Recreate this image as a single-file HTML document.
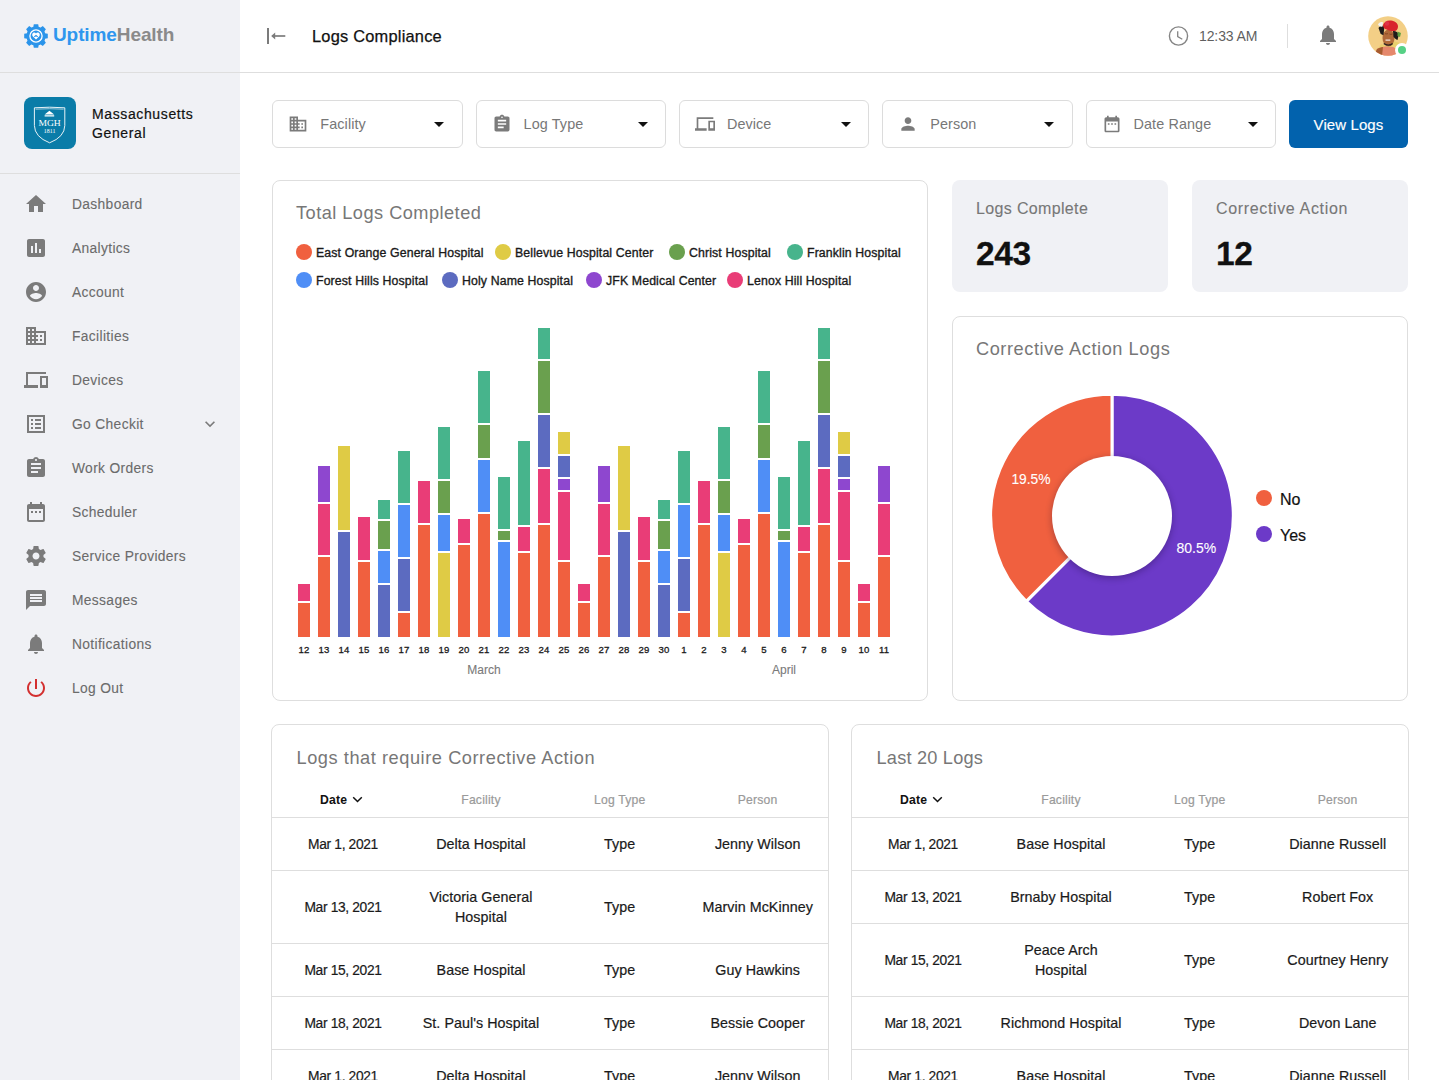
<!DOCTYPE html>
<html><head><meta charset="utf-8">
<style>
*{box-sizing:border-box;margin:0;padding:0}
html,body{width:1439px;height:1080px;overflow:hidden;background:#fff;font-family:"Liberation Sans",sans-serif;color:#1f1f1f}
.a{position:absolute}
.t{position:absolute;white-space:nowrap;line-height:1}
.hl{position:absolute;height:1px;background:#DEDEDE}
.card{position:absolute;border:1px solid #DEDEDE;border-radius:8px;background:#fff}
.filt{position:absolute;top:100px;height:48px;border:1px solid #DCDCDC;border-radius:6px;background:#fff}
.bar{position:absolute;width:12px}
</style></head>
<body>

<div class="a" style="left:0;top:0;width:240px;height:1080px;background:#F0F1F5"></div>
<div class="hl" style="left:0;top:72px;width:1439px"></div>
<div class="hl" style="left:0;top:173px;width:240px"></div>
<svg class="a" style="left:24px;top:24px" width="24" height="24" viewBox="0 0 24 24"><path fill="#2B94EA" d="M9.23 3.23 L9.81 0.20 L14.19 0.20 L14.77 3.23 L16.25 3.84 L18.80 2.11 L21.89 5.20 L20.16 7.75 L20.77 9.23 L23.80 9.81 L23.80 14.19 L20.77 14.77 L20.16 16.25 L21.89 18.80 L18.80 21.89 L16.25 20.16 L14.77 20.77 L14.19 23.80 L9.81 23.80 L9.23 20.77 L7.75 20.16 L5.20 21.89 L2.11 18.80 L3.84 16.25 L3.23 14.77 L0.20 14.19 L0.20 9.81 L3.23 9.23 L3.84 7.75 L2.11 5.20 L5.20 2.11 L7.75 3.84Z"/><circle cx="12" cy="12" r="9.6" fill="#2B94EA"/><circle cx="12" cy="12" r="6.1" fill="none" stroke="#fff" stroke-width="1.3"/><path fill="#fff" d="M12 15.4L8.9 12.5C7.8 11.5 8 9.2 9.7 8.6C10.7 8.3 11.5 8.8 12 9.4C12.5 8.8 13.3 8.3 14.3 8.6C16 9.2 16.2 11.5 15.1 12.5Z"/><path d="M10.3 12.9L12 11.5L13.7 12.9" stroke="#2B94EA" stroke-width="1.1" fill="none"/></svg>
<div class="t" style="left:53px;top:25px;font-size:19px;color:#1f1f1f;font-weight:bold;letter-spacing:-0.1px"><span style="color:#2E96EE">Uptime</span><span style="color:#8A8A8A">Health</span></div>
<div class="a" style="left:24px;top:97px;width:52px;height:52px;border-radius:8px;background:#0A7CA8"></div>
<svg class="a" style="left:24px;top:97px" width="52" height="52" viewBox="0 0 52 52">
<path d="M10.4 10.8Q25.6 9.6 40.8 10.8L40.8 28.5Q40.6 40 25.6 45.8Q10.6 40 10.4 28.5Z" fill="none" stroke="#fff" stroke-width="0.9"/>
<path d="M11.6 12.2Q25.6 11.2 39.6 12.2" fill="none" stroke="#fff" stroke-width="0.6"/>
<path d="M25.4 13.8L30.2 17.4H20.6Z M20.6 18.3h9.6v1.3h-9.6z" fill="#fff"/>
<text x="14.4" y="28.8" font-family="Liberation Serif" font-size="9.2" fill="#fff" textLength="22.4" lengthAdjust="spacingAndGlyphs">MGH</text>
<text x="19.8" y="35.5" font-family="Liberation Serif" font-size="5.6" fill="#fff" textLength="11.6" lengthAdjust="spacingAndGlyphs">1811</text>
</svg>
<div class="t" style="left:92px;top:107.2px;font-size:14px;color:#111;font-weight:normal;letter-spacing:0.62px;-webkit-text-stroke:0.2px #111">Massachusetts</div>
<div class="t" style="left:92px;top:126.2px;font-size:14px;color:#111;font-weight:normal;letter-spacing:0.62px;-webkit-text-stroke:0.2px #111">General</div>
<svg class="a" style="left:24px;top:192px" width="24" height="24" viewBox="0 0 24 24"><path fill="#7B7B7B" d="M10 20v-6h4v6h5v-8h3L12 3 2 12h3v8z"/></svg>
<div class="t" style="left:72px;top:198.3px;font-size:13.8px;color:#6B6B6B;font-weight:normal;letter-spacing:0.35px;-webkit-text-stroke:0.1px #6B6B6B">Dashboard</div>
<svg class="a" style="left:24px;top:236px" width="24" height="24" viewBox="0 0 24 24"><path fill="#7B7B7B" d="M19 3H5c-1.1 0-2 .9-2 2v14c0 1.1.9 2 2 2h14c1.1 0 2-.9 2-2V5c0-1.1-.9-2-2-2zM9 17H7v-7h2v7zm4 0h-2V7h2v10zm4 0h-2v-4h2v4z"/></svg>
<div class="t" style="left:72px;top:242.3px;font-size:13.8px;color:#6B6B6B;font-weight:normal;letter-spacing:0.35px;-webkit-text-stroke:0.1px #6B6B6B">Analytics</div>
<svg class="a" style="left:24px;top:280px" width="24" height="24" viewBox="0 0 24 24"><path fill="#7B7B7B" d="M12 2C6.48 2 2 6.48 2 12s4.48 10 10 10 10-4.48 10-10S17.52 2 12 2zm0 3c1.66 0 3 1.34 3 3s-1.34 3-3 3-3-1.34-3-3 1.34-3 3-3zm0 14.2c-2.5 0-4.71-1.28-6-3.22.03-1.99 4-3.08 6-3.08 1.990 0 5.97 1.09 6 3.08-1.29 1.94-3.5 3.22-6 3.22z"/></svg>
<div class="t" style="left:72px;top:286.3px;font-size:13.8px;color:#6B6B6B;font-weight:normal;letter-spacing:0.35px;-webkit-text-stroke:0.1px #6B6B6B">Account</div>
<svg class="a" style="left:24px;top:324px" width="24" height="24" viewBox="0 0 24 24"><path fill="#7B7B7B" d="M12 7V3H2v18h20V7H12zM6 19H4v-2h2v2zm0-4H4v-2h2v2zm0-4H4V9h2v2zm0-4H4V5h2v2zm4 12H8v-2h2v2zm0-4H8v-2h2v2zm0-4H8V9h2v2zm0-4H8V5h2v2zm10 12h-8v-2h2v-2h-2v-2h2v-2h-2V9h8v10zm-2-8h-2v2h2v-2zm0 4h-2v2h2v-2z"/></svg>
<div class="t" style="left:72px;top:330.3px;font-size:13.8px;color:#6B6B6B;font-weight:normal;letter-spacing:0.35px;-webkit-text-stroke:0.1px #6B6B6B">Facilities</div>
<svg class="a" style="left:24px;top:368px" width="24" height="24" viewBox="0 0 24 24"><path fill="#7B7B7B" d="M4 6h18V4H2v13H0v3h14v-3H4V6zm20 2h-8v12h8V8zm-2 9h-4v-7h4v7z"/></svg>
<div class="t" style="left:72px;top:374.3px;font-size:13.8px;color:#6B6B6B;font-weight:normal;letter-spacing:0.35px;-webkit-text-stroke:0.1px #6B6B6B">Devices</div>
<svg class="a" style="left:24px;top:412px" width="24" height="24" viewBox="0 0 24 24"><path fill="#7B7B7B" d="M19 5v14H5V5h14m2-2H3v18h18V3zM11 7h6v2h-6V7zm0 4h6v2h-6v-2zm0 4h6v2h-6zM7 7h2v2H7zm0 4h2v2H7zm0 4h2v2H7z"/></svg>
<div class="t" style="left:72px;top:418.3px;font-size:13.8px;color:#6B6B6B;font-weight:normal;letter-spacing:0.35px;-webkit-text-stroke:0.1px #6B6B6B">Go Checkit</div>
<svg class="a" style="left:24px;top:456px" width="24" height="24" viewBox="0 0 24 24"><path fill="#7B7B7B" d="M19 3h-4.18C14.4 1.84 13.3 1 12 1c-1.3 0-2.4.84-2.82 2H5c-1.1 0-2 .9-2 2v14c0 1.1.9 2 2 2h14c1.1 0 2-.9 2-2V5c0-1.1-.9-2-2-2zm-7 0c.55 0 1 .45 1 1s-.45 1-1 1-1-.45-1-1 .45-1 1-1zm2 14H7v-2h7v2zm3-4H7v-2h10v2zm0-4H7V7h10v2z"/></svg>
<div class="t" style="left:72px;top:462.3px;font-size:13.8px;color:#6B6B6B;font-weight:normal;letter-spacing:0.35px;-webkit-text-stroke:0.1px #6B6B6B">Work Orders</div>
<svg class="a" style="left:24px;top:500px" width="24" height="24" viewBox="0 0 24 24"><path fill="#7B7B7B" d="M9 11H7v2h2v-2zm4 0h-2v2h2v-2zm4 0h-2v2h2v-2zm2-7h-1V2h-2v2H8V2H6v2H5c-1.11 0-1.99.9-1.99 2L3 20c0 1.1.89 2 2 2h14c1.1 0 2-.9 2-2V6c0-1.1-.9-2-2-2zm0 16H5V9h14v11z"/></svg>
<div class="t" style="left:72px;top:506.3px;font-size:13.8px;color:#6B6B6B;font-weight:normal;letter-spacing:0.35px;-webkit-text-stroke:0.1px #6B6B6B">Scheduler</div>
<svg class="a" style="left:24px;top:544px" width="24" height="24" viewBox="0 0 24 24"><path fill="#7B7B7B" d="M19.43 12.98c.04-.32.07-.64.07-.98s-.03-.66-.07-.98l2.11-1.65c.19-.15.24-.42.12-.64l-2-3.46c-.12-.22-.39-.3-.61-.22l-2.49 1c-.52-.4-1.08-.73-1.69-.98l-.38-2.65C14.46 2.18 14.25 2 14 2h-4c-.25 0-.46.18-.49.42l-.38 2.65c-.61.25-1.17.59-1.69.98l-2.49-1c-.23-.09-.49 0-.61.22l-2 3.46c-.13.22-.07.49.12.64l2.11 1.65c-.04.32-.07.65-.07.98s.03.66.07.98l-2.11 1.65c-.19.15-.24.42-.12.64l2 3.46c.12.22.39.3.61.22l2.49-1c.52.4 1.08.73 1.69.98l.38 2.65c.03.24.24.42.49.42h4c.25 0 .46-.18.49-.42l.38-2.65c.61-.25 1.17-.59 1.69-.98l2.49 1c.23.09.49 0 .61-.22l2-3.46c.12-.22.07-.49-.12-.64l-2.11-1.65zM12 15.5c-1.93 0-3.5-1.57-3.5-3.5s1.57-3.5 3.5-3.5 3.5 1.57 3.5 3.5-1.57 3.5-3.5 3.5z"/></svg>
<div class="t" style="left:72px;top:550.3px;font-size:13.8px;color:#6B6B6B;font-weight:normal;letter-spacing:0.35px;-webkit-text-stroke:0.1px #6B6B6B">Service Providers</div>
<svg class="a" style="left:24px;top:588px" width="24" height="24" viewBox="0 0 24 24"><path fill="#7B7B7B" d="M20 2H4c-1.1 0-1.99.9-1.99 2L2 22l4-4h14c1.1 0 2-.9 2-2V4c0-1.1-.9-2-2-2zm-2 12H6v-2h12v2zm0-3H6V9h12v2zm0-3H6V6h12v2z"/></svg>
<div class="t" style="left:72px;top:594.3px;font-size:13.8px;color:#6B6B6B;font-weight:normal;letter-spacing:0.35px;-webkit-text-stroke:0.1px #6B6B6B">Messages</div>
<svg class="a" style="left:24px;top:632px" width="24" height="24" viewBox="0 0 24 24"><path fill="#7B7B7B" d="M12 22c1.1 0 2-.9 2-2h-4c0 1.1.89 2 2 2zm6-6v-5c0-3.07-1.64-5.64-4.5-6.32V4c0-.83-.67-1.5-1.5-1.5s-1.5.67-1.5 1.5v.68C7.63 5.36 6 7.920 6 11v5l-2 2v1h16v-1l-2-2z"/></svg>
<div class="t" style="left:72px;top:638.3px;font-size:13.8px;color:#6B6B6B;font-weight:normal;letter-spacing:0.35px;-webkit-text-stroke:0.1px #6B6B6B">Notifications</div>
<svg class="a" style="left:24px;top:676px" width="24" height="24" viewBox="0 0 24 24"><path fill="#D32F2F" d="M13 3h-2v10h2V3zm4.83 2.17l-1.42 1.42C17.99 7.86 19 9.81 19 12c0 3.87-3.13 7-7 7s-7-3.13-7-7c0-2.19 1.01-4.14 2.58-5.42L6.17 5.17C4.23 6.82 3 9.26 3 12c0 4.97 4.03 9 9 9s9-4.03 9-9c0-2.74-1.23-5.18-3.17-6.83z"/></svg>
<div class="t" style="left:72px;top:682.3px;font-size:13.8px;color:#6B6B6B;font-weight:normal;letter-spacing:0.35px;-webkit-text-stroke:0.1px #6B6B6B">Log Out</div>
<svg class="a" style="left:200px;top:414px" width="20" height="20" viewBox="0 0 24 24"><path fill="#7B7B7B" d="M16.59 8.59L12 13.17 7.41 8.59 6 10l6 6 6-6z"/></svg>
<div class="a" style="left:267px;top:28px;width:2px;height:16px;background:#7B7B7B"></div>
<svg class="a" style="left:270px;top:30px" width="16" height="12" viewBox="0 0 16 12"><path d="M15.3 6H2.5" stroke="#7B7B7B" stroke-width="1.7" fill="none"/><path d="M1.2 6L5.2 2.6V9.4Z" fill="#7B7B7B"/></svg>
<div class="t" style="left:312px;top:28px;font-size:16.4px;color:#111;font-weight:normal;letter-spacing:0.22px;-webkit-text-stroke:0.25px #111">Logs Compliance</div>
<svg class="a" style="left:1166px;top:24px" width="25" height="24" viewBox="0 0 25 24"><circle cx="12.5" cy="12" r="9.1" fill="none" stroke="#858585" stroke-width="1.4"/><path d="M11.7 7.2V12.6L16.3 15.3" fill="none" stroke="#858585" stroke-width="1.3"/></svg>
<div class="t" style="left:1199px;top:29px;font-size:14px;color:#5F5F5F;font-weight:normal;letter-spacing:-0.1px">12:33 AM</div>
<div class="a" style="left:1287px;top:24px;width:1px;height:24px;background:#DEDEDE"></div>
<svg class="a" style="left:1316px;top:23px" width="24" height="24" viewBox="0 0 24 24"><path fill="#7B7B7B" d="M12 22c1.1 0 2-.9 2-2h-4c0 1.1.89 2 2 2zm6-6v-5c0-3.07-1.64-5.64-4.5-6.32V4c0-.83-.67-1.5-1.5-1.5s-1.5.67-1.5 1.5v.68C7.63 5.36 6 7.920 6 11v5l-2 2v1h16v-1l-2-2z"/></svg>
<svg class="a" style="left:1368px;top:16px" width="40" height="40" viewBox="0 0 40 40">
<defs><clipPath id="avc"><circle cx="20" cy="20" r="19.8"/></clipPath></defs>
<g clip-path="url(#avc)">
<rect width="40" height="40" fill="#F3CF86"/>
<path d="M8 36L13 28L20 31L25 25L32 27L29 33Z" fill="#E2CF62" opacity="0.7"/>
<path d="M6 40L9 33C13 31 17 30 21 31C25 30 28 32 31 36L31 40Z" fill="#E5886C"/>
<path d="M6 40L9 33C11 32 13 31 15 31L14 40Z" fill="#A65C30"/>
<ellipse cx="20.5" cy="22" rx="6" ry="8.6" fill="#B06A3A"/>
<path d="M17 17.5c1 .5 2 .5 3 0M21.5 18c1 .5 2 .4 3 0" stroke="#7A3F1E" stroke-width="0.8" fill="none"/>
<path d="M17.5 24.2h4.8" stroke="#F4E6E0" stroke-width="1.3"/>
<path d="M15.8 27.5c2.5 2.2 6.5 2.2 8.8 0" stroke="#2A2320" stroke-width="1.4" fill="none"/>
<path d="M10.5 12c1-2 4-3 6-2l-1 9c-1 0-2-.5-3-1.5z" fill="#1F1B1A"/>
<path d="M25 15c2-.5 5 1 6 3l-1.5 6c-1.5-.5-3-2-4-3z" fill="#1F1B1A"/>
<path d="M15 9c1-3 4-5 8-4.5c4 .5 7 2.5 7 6c0 2.5-1.5 4.5-3.5 4.5c-3 .5-6-.5-8-1.5c-2-.5-3.5-2-3.5-4.5z" fill="#D8232D"/>
<circle cx="19" cy="7.5" r="2.2" fill="#E23A5E" opacity="0.6"/>
<path d="M10 8.5c1-2 3-3 5-2l-.5 4c-1.5.5-3.5 0-4.5-2z" fill="#F2F2F2"/>
<path d="M29.5 15.5l3.5 1.5-1 4-2.5-1z" fill="#5FA040"/>
</g></svg>
<div class="a" style="left:1395px;top:43px;width:14px;height:14px;border-radius:50%;background:#fff"></div>
<div class="a" style="left:1398px;top:46px;width:8px;height:8px;border-radius:50%;background:#56D185"></div>
<div class="filt" style="left:272.3px;width:190.6px"></div>
<svg class="a" style="left:288.3px;top:114px" width="20" height="20" viewBox="0 0 24 24"><path fill="#7B7B7B" d="M12 7V3H2v18h20V7H12zM6 19H4v-2h2v2zm0-4H4v-2h2v2zm0-4H4V9h2v2zm0-4H4V5h2v2zm4 12H8v-2h2v2zm0-4H8v-2h2v2zm0-4H8V9h2v2zm0-4H8V5h2v2zm10 12h-8v-2h2v-2h-2v-2h2v-2h-2V9h8v10zm-2-8h-2v2h2v-2zm0 4h-2v2h2v-2z"/></svg>
<div class="t" style="left:320.3px;top:117px;font-size:14.4px;color:#777;font-weight:normal;letter-spacing:0.1px">Facility</div>
<svg class="a" style="left:434.3px;top:121.5px" width="10" height="5" viewBox="0 0 10 5"><path d="M0 0h10L5 5z" fill="#111"/></svg>
<div class="filt" style="left:475.6px;width:190.6px"></div>
<svg class="a" style="left:491.6px;top:114px" width="20" height="20" viewBox="0 0 24 24"><path fill="#7B7B7B" d="M19 3h-4.18C14.4 1.84 13.3 1 12 1c-1.3 0-2.4.84-2.82 2H5c-1.1 0-2 .9-2 2v14c0 1.1.9 2 2 2h14c1.1 0 2-.9 2-2V5c0-1.1-.9-2-2-2zm-7 0c.55 0 1 .45 1 1s-.45 1-1 1-1-.45-1-1 .45-1 1-1zm2 14H7v-2h7v2zm3-4H7v-2h10v2zm0-4H7V7h10v2z"/></svg>
<div class="t" style="left:523.6px;top:117px;font-size:14.4px;color:#777;font-weight:normal;letter-spacing:0.1px">Log Type</div>
<svg class="a" style="left:637.6px;top:121.5px" width="10" height="5" viewBox="0 0 10 5"><path d="M0 0h10L5 5z" fill="#111"/></svg>
<div class="filt" style="left:678.9px;width:190.6px"></div>
<svg class="a" style="left:694.9px;top:114px" width="20" height="20" viewBox="0 0 24 24"><path fill="#7B7B7B" d="M4 6h18V4H2v13H0v3h14v-3H4V6zm20 2h-8v12h8V8zm-2 9h-4v-7h4v7z"/></svg>
<div class="t" style="left:726.9px;top:117px;font-size:14.4px;color:#777;font-weight:normal;letter-spacing:0.1px">Device</div>
<svg class="a" style="left:840.9px;top:121.5px" width="10" height="5" viewBox="0 0 10 5"><path d="M0 0h10L5 5z" fill="#111"/></svg>
<div class="filt" style="left:882.2px;width:190.6px"></div>
<svg class="a" style="left:898.2px;top:114px" width="20" height="20" viewBox="0 0 24 24"><path fill="#7B7B7B" d="M12 12c2.21 0 4-1.79 4-4s-1.79-4-4-4-4 1.79-4 4 1.79 4 4 4zm0 2c-2.67 0-8 1.34-8 4v2h16v-2c0-2.66-5.33-4-8-4z"/></svg>
<div class="t" style="left:930.2px;top:117px;font-size:14.4px;color:#777;font-weight:normal;letter-spacing:0.1px">Person</div>
<svg class="a" style="left:1044.2px;top:121.5px" width="10" height="5" viewBox="0 0 10 5"><path d="M0 0h10L5 5z" fill="#111"/></svg>
<div class="filt" style="left:1085.5px;width:190.6px"></div>
<svg class="a" style="left:1101.5px;top:114px" width="20" height="20" viewBox="0 0 24 24"><path fill="#7B7B7B" d="M9 11H7v2h2v-2zm4 0h-2v2h2v-2zm4 0h-2v2h2v-2zm2-7h-1V2h-2v2H8V2H6v2H5c-1.11 0-1.99.9-1.99 2L3 20c0 1.1.89 2 2 2h14c1.1 0 2-.9 2-2V6c0-1.1-.9-2-2-2zm0 16H5V9h14v11z"/></svg>
<div class="t" style="left:1133.5px;top:117px;font-size:14.4px;color:#777;font-weight:normal;letter-spacing:0.1px">Date Range</div>
<svg class="a" style="left:1247.5px;top:121.5px" width="10" height="5" viewBox="0 0 10 5"><path d="M0 0h10L5 5z" fill="#111"/></svg>
<div class="a" style="left:1289px;top:100px;width:119px;height:48px;border-radius:6px;background:#0262AD"></div>
<div class="t" style="left:1228.5px;top:116.7px;width:240px;text-align:center;font-size:15px;color:#fff;font-weight:normal;letter-spacing:0.1px;-webkit-text-stroke:0.15px #fff">View Logs</div>
<div class="card" style="left:272px;top:180px;width:656px;height:521px"></div>
<div class="t" style="left:296px;top:204px;font-size:18.2px;color:#777;font-weight:normal;letter-spacing:0.47px">Total Logs Completed</div>
<div class="a" style="left:296px;top:244px;width:16px;height:16px;border-radius:50%;background:#F0603F"></div>
<div class="t" style="left:316px;top:246.7px;font-size:12.3px;color:#1a1a1a;font-weight:normal;letter-spacing:0.13px;-webkit-text-stroke:0.35px #1a1a1a">East Orange General Hospital</div>
<div class="a" style="left:495px;top:244px;width:16px;height:16px;border-radius:50%;background:#DFCB45"></div>
<div class="t" style="left:515px;top:246.7px;font-size:12.3px;color:#1a1a1a;font-weight:normal;letter-spacing:0.13px;-webkit-text-stroke:0.35px #1a1a1a">Bellevue Hospital Center</div>
<div class="a" style="left:669px;top:244px;width:16px;height:16px;border-radius:50%;background:#6AA04E"></div>
<div class="t" style="left:689px;top:246.7px;font-size:12.3px;color:#1a1a1a;font-weight:normal;letter-spacing:0.13px;-webkit-text-stroke:0.35px #1a1a1a">Christ Hospital</div>
<div class="a" style="left:787px;top:244px;width:16px;height:16px;border-radius:50%;background:#47B48C"></div>
<div class="t" style="left:807px;top:246.7px;font-size:12.3px;color:#1a1a1a;font-weight:normal;letter-spacing:0.13px;-webkit-text-stroke:0.35px #1a1a1a">Franklin Hospital</div>
<div class="a" style="left:296px;top:272px;width:16px;height:16px;border-radius:50%;background:#4F8EF6"></div>
<div class="t" style="left:316px;top:274.7px;font-size:12.3px;color:#1a1a1a;font-weight:normal;letter-spacing:0.13px;-webkit-text-stroke:0.35px #1a1a1a">Forest Hills Hospital</div>
<div class="a" style="left:442px;top:272px;width:16px;height:16px;border-radius:50%;background:#5C6BC0"></div>
<div class="t" style="left:462px;top:274.7px;font-size:12.3px;color:#1a1a1a;font-weight:normal;letter-spacing:0.13px;-webkit-text-stroke:0.35px #1a1a1a">Holy Name Hospital</div>
<div class="a" style="left:586px;top:272px;width:16px;height:16px;border-radius:50%;background:#8E47CF"></div>
<div class="t" style="left:606px;top:274.7px;font-size:12.3px;color:#1a1a1a;font-weight:normal;letter-spacing:0.13px;-webkit-text-stroke:0.35px #1a1a1a">JFK Medical Center</div>
<div class="a" style="left:727px;top:272px;width:16px;height:16px;border-radius:50%;background:#E93D77"></div>
<div class="t" style="left:747px;top:274.7px;font-size:12.3px;color:#1a1a1a;font-weight:normal;letter-spacing:0.13px;-webkit-text-stroke:0.35px #1a1a1a">Lenox Hill Hospital</div>
<div class="bar" style="left:298px;top:603px;height:34px;background:#F0603F"></div>
<div class="bar" style="left:298px;top:584px;height:17px;background:#E93D77"></div>
<div class="t" style="left:289.0px;top:645px;width:30px;text-align:center;font-size:9.6px;color:#1a1a1a;font-weight:normal;letter-spacing:0.1px;-webkit-text-stroke:0.3px #1a1a1a">12</div>
<div class="bar" style="left:318px;top:557px;height:80px;background:#F0603F"></div>
<div class="bar" style="left:318px;top:504px;height:51px;background:#E93D77"></div>
<div class="bar" style="left:318px;top:466px;height:36px;background:#8E47CF"></div>
<div class="t" style="left:309.0px;top:645px;width:30px;text-align:center;font-size:9.6px;color:#1a1a1a;font-weight:normal;letter-spacing:0.1px;-webkit-text-stroke:0.3px #1a1a1a">13</div>
<div class="bar" style="left:338px;top:532px;height:105px;background:#5C6BC0"></div>
<div class="bar" style="left:338px;top:446px;height:84px;background:#DFCB45"></div>
<div class="t" style="left:329.0px;top:645px;width:30px;text-align:center;font-size:9.6px;color:#1a1a1a;font-weight:normal;letter-spacing:0.1px;-webkit-text-stroke:0.3px #1a1a1a">14</div>
<div class="bar" style="left:358px;top:562px;height:75px;background:#F0603F"></div>
<div class="bar" style="left:358px;top:517px;height:43px;background:#E93D77"></div>
<div class="t" style="left:349.0px;top:645px;width:30px;text-align:center;font-size:9.6px;color:#1a1a1a;font-weight:normal;letter-spacing:0.1px;-webkit-text-stroke:0.3px #1a1a1a">15</div>
<div class="bar" style="left:378px;top:585px;height:52px;background:#5C6BC0"></div>
<div class="bar" style="left:378px;top:551px;height:32px;background:#4F8EF6"></div>
<div class="bar" style="left:378px;top:521px;height:28px;background:#6AA04E"></div>
<div class="bar" style="left:378px;top:500px;height:18.5px;background:#47B48C"></div>
<div class="t" style="left:369.0px;top:645px;width:30px;text-align:center;font-size:9.6px;color:#1a1a1a;font-weight:normal;letter-spacing:0.1px;-webkit-text-stroke:0.3px #1a1a1a">16</div>
<div class="bar" style="left:398px;top:613px;height:24px;background:#F0603F"></div>
<div class="bar" style="left:398px;top:559px;height:52px;background:#5C6BC0"></div>
<div class="bar" style="left:398px;top:505px;height:52px;background:#4F8EF6"></div>
<div class="bar" style="left:398px;top:451px;height:52px;background:#47B48C"></div>
<div class="t" style="left:389.0px;top:645px;width:30px;text-align:center;font-size:9.6px;color:#1a1a1a;font-weight:normal;letter-spacing:0.1px;-webkit-text-stroke:0.3px #1a1a1a">17</div>
<div class="bar" style="left:418px;top:525px;height:112px;background:#F0603F"></div>
<div class="bar" style="left:418px;top:481px;height:42px;background:#E93D77"></div>
<div class="t" style="left:409.0px;top:645px;width:30px;text-align:center;font-size:9.6px;color:#1a1a1a;font-weight:normal;letter-spacing:0.1px;-webkit-text-stroke:0.3px #1a1a1a">18</div>
<div class="bar" style="left:438px;top:553px;height:84px;background:#DFCB45"></div>
<div class="bar" style="left:438px;top:515px;height:36px;background:#4F8EF6"></div>
<div class="bar" style="left:438px;top:481px;height:32px;background:#6AA04E"></div>
<div class="bar" style="left:438px;top:427px;height:52px;background:#47B48C"></div>
<div class="t" style="left:429.0px;top:645px;width:30px;text-align:center;font-size:9.6px;color:#1a1a1a;font-weight:normal;letter-spacing:0.1px;-webkit-text-stroke:0.3px #1a1a1a">19</div>
<div class="bar" style="left:458px;top:545px;height:92px;background:#F0603F"></div>
<div class="bar" style="left:458px;top:519px;height:24px;background:#E93D77"></div>
<div class="t" style="left:449.0px;top:645px;width:30px;text-align:center;font-size:9.6px;color:#1a1a1a;font-weight:normal;letter-spacing:0.1px;-webkit-text-stroke:0.3px #1a1a1a">20</div>
<div class="bar" style="left:478px;top:514px;height:123px;background:#F0603F"></div>
<div class="bar" style="left:478px;top:460px;height:52px;background:#4F8EF6"></div>
<div class="bar" style="left:478px;top:425px;height:33px;background:#6AA04E"></div>
<div class="bar" style="left:478px;top:371px;height:52px;background:#47B48C"></div>
<div class="t" style="left:469.0px;top:645px;width:30px;text-align:center;font-size:9.6px;color:#1a1a1a;font-weight:normal;letter-spacing:0.1px;-webkit-text-stroke:0.3px #1a1a1a">21</div>
<div class="bar" style="left:498px;top:542px;height:95px;background:#4F8EF6"></div>
<div class="bar" style="left:498px;top:531px;height:9px;background:#6AA04E"></div>
<div class="bar" style="left:498px;top:477px;height:52px;background:#47B48C"></div>
<div class="t" style="left:489.0px;top:645px;width:30px;text-align:center;font-size:9.6px;color:#1a1a1a;font-weight:normal;letter-spacing:0.1px;-webkit-text-stroke:0.3px #1a1a1a">22</div>
<div class="bar" style="left:518px;top:553px;height:84px;background:#F0603F"></div>
<div class="bar" style="left:518px;top:527px;height:24px;background:#E93D77"></div>
<div class="bar" style="left:518px;top:441px;height:84px;background:#47B48C"></div>
<div class="t" style="left:509.0px;top:645px;width:30px;text-align:center;font-size:9.6px;color:#1a1a1a;font-weight:normal;letter-spacing:0.1px;-webkit-text-stroke:0.3px #1a1a1a">23</div>
<div class="bar" style="left:538px;top:525px;height:112px;background:#F0603F"></div>
<div class="bar" style="left:538px;top:469px;height:54px;background:#E93D77"></div>
<div class="bar" style="left:538px;top:415px;height:52px;background:#5C6BC0"></div>
<div class="bar" style="left:538px;top:361px;height:52px;background:#6AA04E"></div>
<div class="bar" style="left:538px;top:328px;height:31px;background:#47B48C"></div>
<div class="t" style="left:529.0px;top:645px;width:30px;text-align:center;font-size:9.6px;color:#1a1a1a;font-weight:normal;letter-spacing:0.1px;-webkit-text-stroke:0.3px #1a1a1a">24</div>
<div class="bar" style="left:558px;top:562px;height:75px;background:#F0603F"></div>
<div class="bar" style="left:558px;top:492px;height:68px;background:#E93D77"></div>
<div class="bar" style="left:558px;top:479px;height:11px;background:#8E47CF"></div>
<div class="bar" style="left:558px;top:456px;height:21px;background:#5C6BC0"></div>
<div class="bar" style="left:558px;top:432px;height:22px;background:#DFCB45"></div>
<div class="t" style="left:549.0px;top:645px;width:30px;text-align:center;font-size:9.6px;color:#1a1a1a;font-weight:normal;letter-spacing:0.1px;-webkit-text-stroke:0.3px #1a1a1a">25</div>
<div class="bar" style="left:578px;top:603px;height:34px;background:#F0603F"></div>
<div class="bar" style="left:578px;top:584px;height:17px;background:#E93D77"></div>
<div class="t" style="left:569.0px;top:645px;width:30px;text-align:center;font-size:9.6px;color:#1a1a1a;font-weight:normal;letter-spacing:0.1px;-webkit-text-stroke:0.3px #1a1a1a">26</div>
<div class="bar" style="left:598px;top:557px;height:80px;background:#F0603F"></div>
<div class="bar" style="left:598px;top:504px;height:51px;background:#E93D77"></div>
<div class="bar" style="left:598px;top:466px;height:36px;background:#8E47CF"></div>
<div class="t" style="left:589.0px;top:645px;width:30px;text-align:center;font-size:9.6px;color:#1a1a1a;font-weight:normal;letter-spacing:0.1px;-webkit-text-stroke:0.3px #1a1a1a">27</div>
<div class="bar" style="left:618px;top:532px;height:105px;background:#5C6BC0"></div>
<div class="bar" style="left:618px;top:446px;height:84px;background:#DFCB45"></div>
<div class="t" style="left:609.0px;top:645px;width:30px;text-align:center;font-size:9.6px;color:#1a1a1a;font-weight:normal;letter-spacing:0.1px;-webkit-text-stroke:0.3px #1a1a1a">28</div>
<div class="bar" style="left:638px;top:562px;height:75px;background:#F0603F"></div>
<div class="bar" style="left:638px;top:517px;height:43px;background:#E93D77"></div>
<div class="t" style="left:629.0px;top:645px;width:30px;text-align:center;font-size:9.6px;color:#1a1a1a;font-weight:normal;letter-spacing:0.1px;-webkit-text-stroke:0.3px #1a1a1a">29</div>
<div class="bar" style="left:658px;top:585px;height:52px;background:#5C6BC0"></div>
<div class="bar" style="left:658px;top:551px;height:32px;background:#4F8EF6"></div>
<div class="bar" style="left:658px;top:521px;height:28px;background:#6AA04E"></div>
<div class="bar" style="left:658px;top:500px;height:18.5px;background:#47B48C"></div>
<div class="t" style="left:649.0px;top:645px;width:30px;text-align:center;font-size:9.6px;color:#1a1a1a;font-weight:normal;letter-spacing:0.1px;-webkit-text-stroke:0.3px #1a1a1a">30</div>
<div class="bar" style="left:678px;top:613px;height:24px;background:#F0603F"></div>
<div class="bar" style="left:678px;top:559px;height:52px;background:#5C6BC0"></div>
<div class="bar" style="left:678px;top:505px;height:52px;background:#4F8EF6"></div>
<div class="bar" style="left:678px;top:451px;height:52px;background:#47B48C"></div>
<div class="t" style="left:669.0px;top:645px;width:30px;text-align:center;font-size:9.6px;color:#1a1a1a;font-weight:normal;letter-spacing:0.1px;-webkit-text-stroke:0.3px #1a1a1a">1</div>
<div class="bar" style="left:698px;top:525px;height:112px;background:#F0603F"></div>
<div class="bar" style="left:698px;top:481px;height:42px;background:#E93D77"></div>
<div class="t" style="left:689.0px;top:645px;width:30px;text-align:center;font-size:9.6px;color:#1a1a1a;font-weight:normal;letter-spacing:0.1px;-webkit-text-stroke:0.3px #1a1a1a">2</div>
<div class="bar" style="left:718px;top:553px;height:84px;background:#DFCB45"></div>
<div class="bar" style="left:718px;top:515px;height:36px;background:#4F8EF6"></div>
<div class="bar" style="left:718px;top:481px;height:32px;background:#6AA04E"></div>
<div class="bar" style="left:718px;top:427px;height:52px;background:#47B48C"></div>
<div class="t" style="left:709.0px;top:645px;width:30px;text-align:center;font-size:9.6px;color:#1a1a1a;font-weight:normal;letter-spacing:0.1px;-webkit-text-stroke:0.3px #1a1a1a">3</div>
<div class="bar" style="left:738px;top:545px;height:92px;background:#F0603F"></div>
<div class="bar" style="left:738px;top:519px;height:24px;background:#E93D77"></div>
<div class="t" style="left:729.0px;top:645px;width:30px;text-align:center;font-size:9.6px;color:#1a1a1a;font-weight:normal;letter-spacing:0.1px;-webkit-text-stroke:0.3px #1a1a1a">4</div>
<div class="bar" style="left:758px;top:514px;height:123px;background:#F0603F"></div>
<div class="bar" style="left:758px;top:460px;height:52px;background:#4F8EF6"></div>
<div class="bar" style="left:758px;top:425px;height:33px;background:#6AA04E"></div>
<div class="bar" style="left:758px;top:371px;height:52px;background:#47B48C"></div>
<div class="t" style="left:749.0px;top:645px;width:30px;text-align:center;font-size:9.6px;color:#1a1a1a;font-weight:normal;letter-spacing:0.1px;-webkit-text-stroke:0.3px #1a1a1a">5</div>
<div class="bar" style="left:778px;top:542px;height:95px;background:#4F8EF6"></div>
<div class="bar" style="left:778px;top:531px;height:9px;background:#6AA04E"></div>
<div class="bar" style="left:778px;top:477px;height:52px;background:#47B48C"></div>
<div class="t" style="left:769.0px;top:645px;width:30px;text-align:center;font-size:9.6px;color:#1a1a1a;font-weight:normal;letter-spacing:0.1px;-webkit-text-stroke:0.3px #1a1a1a">6</div>
<div class="bar" style="left:798px;top:553px;height:84px;background:#F0603F"></div>
<div class="bar" style="left:798px;top:527px;height:24px;background:#E93D77"></div>
<div class="bar" style="left:798px;top:441px;height:84px;background:#47B48C"></div>
<div class="t" style="left:789.0px;top:645px;width:30px;text-align:center;font-size:9.6px;color:#1a1a1a;font-weight:normal;letter-spacing:0.1px;-webkit-text-stroke:0.3px #1a1a1a">7</div>
<div class="bar" style="left:818px;top:525px;height:112px;background:#F0603F"></div>
<div class="bar" style="left:818px;top:469px;height:54px;background:#E93D77"></div>
<div class="bar" style="left:818px;top:415px;height:52px;background:#5C6BC0"></div>
<div class="bar" style="left:818px;top:361px;height:52px;background:#6AA04E"></div>
<div class="bar" style="left:818px;top:328px;height:31px;background:#47B48C"></div>
<div class="t" style="left:809.0px;top:645px;width:30px;text-align:center;font-size:9.6px;color:#1a1a1a;font-weight:normal;letter-spacing:0.1px;-webkit-text-stroke:0.3px #1a1a1a">8</div>
<div class="bar" style="left:838px;top:562px;height:75px;background:#F0603F"></div>
<div class="bar" style="left:838px;top:492px;height:68px;background:#E93D77"></div>
<div class="bar" style="left:838px;top:479px;height:11px;background:#8E47CF"></div>
<div class="bar" style="left:838px;top:456px;height:21px;background:#5C6BC0"></div>
<div class="bar" style="left:838px;top:432px;height:22px;background:#DFCB45"></div>
<div class="t" style="left:829.0px;top:645px;width:30px;text-align:center;font-size:9.6px;color:#1a1a1a;font-weight:normal;letter-spacing:0.1px;-webkit-text-stroke:0.3px #1a1a1a">9</div>
<div class="bar" style="left:858px;top:603px;height:34px;background:#F0603F"></div>
<div class="bar" style="left:858px;top:584px;height:17px;background:#E93D77"></div>
<div class="t" style="left:849.0px;top:645px;width:30px;text-align:center;font-size:9.6px;color:#1a1a1a;font-weight:normal;letter-spacing:0.1px;-webkit-text-stroke:0.3px #1a1a1a">10</div>
<div class="bar" style="left:878px;top:557px;height:80px;background:#F0603F"></div>
<div class="bar" style="left:878px;top:504px;height:51px;background:#E93D77"></div>
<div class="bar" style="left:878px;top:466px;height:36px;background:#8E47CF"></div>
<div class="t" style="left:869.0px;top:645px;width:30px;text-align:center;font-size:9.6px;color:#1a1a1a;font-weight:normal;letter-spacing:0.1px;-webkit-text-stroke:0.3px #1a1a1a">11</div>
<div class="t" style="left:444.0px;top:663.6px;width:80px;text-align:center;font-size:12px;color:#7a7a7a;font-weight:normal;letter-spacing:0px;-webkit-text-stroke:0.1px #7a7a7a">March</div>
<div class="t" style="left:744.0px;top:663.6px;width:80px;text-align:center;font-size:12px;color:#7a7a7a;font-weight:normal;letter-spacing:0px;-webkit-text-stroke:0.1px #7a7a7a">April</div>
<div class="a" style="left:952px;top:180px;width:216px;height:112px;border-radius:8px;background:#F0F1F5"></div>
<div class="t" style="left:976px;top:201px;font-size:16px;color:#777;font-weight:normal;letter-spacing:0.35px;-webkit-text-stroke:0.1px #777">Logs Complete</div>
<div class="t" style="left:976px;top:236.5px;font-size:33.5px;color:#111;font-weight:bold;letter-spacing:-0.4px;-webkit-text-stroke:0.3px #111">243</div>
<div class="a" style="left:1192px;top:180px;width:216px;height:112px;border-radius:8px;background:#F0F1F5"></div>
<div class="t" style="left:1216px;top:201px;font-size:16px;color:#777;font-weight:normal;letter-spacing:0.65px;-webkit-text-stroke:0.1px #777">Corrective Action</div>
<div class="t" style="left:1216px;top:236.5px;font-size:33.5px;color:#111;font-weight:bold;letter-spacing:-0.4px;-webkit-text-stroke:0.3px #111">12</div>
<div class="card" style="left:952px;top:316px;width:456px;height:385px"></div>
<div class="t" style="left:976px;top:340px;font-size:18.2px;color:#777;font-weight:normal;letter-spacing:0.56px">Corrective Action Logs</div>
<svg class="a" style="left:952px;top:316px" width="456" height="385" viewBox="0 0 456 385"><path d="M160.00 78.30A121.3 121.3 0 1 1 74.23 285.37L123.23 236.37A52 52 0 1 0 160.00 147.60Z" fill="#6C3AC8" stroke="#fff" stroke-width="3" stroke-linejoin="bevel"/><path d="M74.23 285.37A121.3 121.3 0 0 1 160.00 78.30L160.00 147.60A52 52 0 0 0 123.23 236.37Z" fill="#F0603F" stroke="#fff" stroke-width="3" stroke-linejoin="bevel"/></svg>
<div class="t" style="left:1001.0px;top:472.6px;width:60px;text-align:center;font-size:13.8px;color:#fff;font-weight:normal;letter-spacing:0px;-webkit-text-stroke:0.1px #fff">19.5%</div>
<div class="a" style="left:1052px;top:455.6px;width:120px;height:120px;border-radius:50%;background:#fff;box-shadow:0 2px 7px rgba(20,0,40,0.32)"></div>
<div class="t" style="left:1166.3px;top:540.6px;width:60px;text-align:center;font-size:14px;color:#fff;font-weight:normal;letter-spacing:0px;-webkit-text-stroke:0.1px #fff">80.5%</div>
<div class="a" style="left:1256px;top:490px;width:16px;height:16px;border-radius:50%;background:#F0603F"></div>
<div class="a" style="left:1256px;top:526px;width:16px;height:16px;border-radius:50%;background:#6C3AC8"></div>
<div class="t" style="left:1280px;top:491.7px;font-size:16px;color:#111;font-weight:normal;letter-spacing:0px;-webkit-text-stroke:0.2px #111">No</div>
<div class="t" style="left:1280px;top:527.7px;font-size:16px;color:#111;font-weight:normal;letter-spacing:0px;-webkit-text-stroke:0.2px #111">Yes</div>
<div class="card" style="left:271px;top:724px;width:558px;height:420px"></div>
<div class="t" style="left:296.5px;top:748.5px;font-size:18.2px;color:#777;font-weight:normal;letter-spacing:0.56px">Logs that require Corrective Action</div>
<div class="t" style="left:320px;top:794px;font-size:12.2px;color:#111;font-weight:bold;letter-spacing:0.2px">Date</div>
<svg class="a" style="left:351.6px;top:794.5px" width="11" height="9" viewBox="0 0 11 9"><path d="M1.2 2.2l4.3 4.3L9.8 2.2" stroke="#111" stroke-width="1.5" fill="none"/></svg>
<div class="t" style="left:411.0px;top:794px;width:140px;text-align:center;font-size:12.2px;color:#9a9a9a;font-weight:normal;letter-spacing:0.2px;-webkit-text-stroke:0.2px #9a9a9a">Facility</div>
<div class="t" style="left:549.7px;top:794px;width:140px;text-align:center;font-size:12.2px;color:#9a9a9a;font-weight:normal;letter-spacing:0.2px;-webkit-text-stroke:0.2px #9a9a9a">Log Type</div>
<div class="t" style="left:687.7px;top:794px;width:140px;text-align:center;font-size:12.2px;color:#9a9a9a;font-weight:normal;letter-spacing:0.2px;-webkit-text-stroke:0.2px #9a9a9a">Person</div>
<div class="hl" style="left:272px;top:817px;width:556px"></div>
<div class="hl" style="left:272px;top:870px;width:556px"></div>
<div class="hl" style="left:272px;top:943px;width:556px"></div>
<div class="hl" style="left:272px;top:996px;width:556px"></div>
<div class="hl" style="left:272px;top:1049px;width:556px"></div>
<div class="t" style="left:263.0px;top:837.6px;width:160px;text-align:center;font-size:13.8px;color:#1a1a1a;font-weight:normal;letter-spacing:-0.35px;-webkit-text-stroke:0.2px #1a1a1a">Mar 1, 2021</div>
<div class="t" style="left:401.0px;top:837.1px;width:160px;text-align:center;font-size:14.3px;color:#1a1a1a;font-weight:normal;letter-spacing:0.05px;-webkit-text-stroke:0.2px #1a1a1a">Delta Hospital</div>
<div class="t" style="left:539.7px;top:837.1px;width:160px;text-align:center;font-size:14.3px;color:#1a1a1a;font-weight:normal;letter-spacing:0.05px;-webkit-text-stroke:0.2px #1a1a1a">Type</div>
<div class="t" style="left:677.7px;top:837.1px;width:160px;text-align:center;font-size:14.3px;color:#1a1a1a;font-weight:normal;letter-spacing:0.05px;-webkit-text-stroke:0.2px #1a1a1a">Jenny Wilson</div>
<div class="t" style="left:263.0px;top:900.6px;width:160px;text-align:center;font-size:13.8px;color:#1a1a1a;font-weight:normal;letter-spacing:-0.35px;-webkit-text-stroke:0.2px #1a1a1a">Mar 13, 2021</div>
<div class="t" style="left:401.0px;top:889.7px;width:160px;text-align:center;font-size:14.3px;color:#1a1a1a;font-weight:normal;letter-spacing:0.05px;-webkit-text-stroke:0.2px #1a1a1a">Victoria General</div>
<div class="t" style="left:401.0px;top:909.9px;width:160px;text-align:center;font-size:14.3px;color:#1a1a1a;font-weight:normal;letter-spacing:0.05px;-webkit-text-stroke:0.2px #1a1a1a">Hospital</div>
<div class="t" style="left:539.7px;top:900.1px;width:160px;text-align:center;font-size:14.3px;color:#1a1a1a;font-weight:normal;letter-spacing:0.05px;-webkit-text-stroke:0.2px #1a1a1a">Type</div>
<div class="t" style="left:677.7px;top:900.1px;width:160px;text-align:center;font-size:14.3px;color:#1a1a1a;font-weight:normal;letter-spacing:0.05px;-webkit-text-stroke:0.2px #1a1a1a">Marvin McKinney</div>
<div class="t" style="left:263.0px;top:963.6px;width:160px;text-align:center;font-size:13.8px;color:#1a1a1a;font-weight:normal;letter-spacing:-0.35px;-webkit-text-stroke:0.2px #1a1a1a">Mar 15, 2021</div>
<div class="t" style="left:401.0px;top:963.1px;width:160px;text-align:center;font-size:14.3px;color:#1a1a1a;font-weight:normal;letter-spacing:0.05px;-webkit-text-stroke:0.2px #1a1a1a">Base Hospital</div>
<div class="t" style="left:539.7px;top:963.1px;width:160px;text-align:center;font-size:14.3px;color:#1a1a1a;font-weight:normal;letter-spacing:0.05px;-webkit-text-stroke:0.2px #1a1a1a">Type</div>
<div class="t" style="left:677.7px;top:963.1px;width:160px;text-align:center;font-size:14.3px;color:#1a1a1a;font-weight:normal;letter-spacing:0.05px;-webkit-text-stroke:0.2px #1a1a1a">Guy Hawkins</div>
<div class="t" style="left:263.0px;top:1016.6px;width:160px;text-align:center;font-size:13.8px;color:#1a1a1a;font-weight:normal;letter-spacing:-0.35px;-webkit-text-stroke:0.2px #1a1a1a">Mar 18, 2021</div>
<div class="t" style="left:401.0px;top:1016.1px;width:160px;text-align:center;font-size:14.3px;color:#1a1a1a;font-weight:normal;letter-spacing:0.05px;-webkit-text-stroke:0.2px #1a1a1a">St. Paul's Hospital</div>
<div class="t" style="left:539.7px;top:1016.1px;width:160px;text-align:center;font-size:14.3px;color:#1a1a1a;font-weight:normal;letter-spacing:0.05px;-webkit-text-stroke:0.2px #1a1a1a">Type</div>
<div class="t" style="left:677.7px;top:1016.1px;width:160px;text-align:center;font-size:14.3px;color:#1a1a1a;font-weight:normal;letter-spacing:0.05px;-webkit-text-stroke:0.2px #1a1a1a">Bessie Cooper</div>
<div class="t" style="left:263.0px;top:1069.6px;width:160px;text-align:center;font-size:13.8px;color:#1a1a1a;font-weight:normal;letter-spacing:-0.35px;-webkit-text-stroke:0.2px #1a1a1a">Mar 1, 2021</div>
<div class="t" style="left:401.0px;top:1069.1px;width:160px;text-align:center;font-size:14.3px;color:#1a1a1a;font-weight:normal;letter-spacing:0.05px;-webkit-text-stroke:0.2px #1a1a1a">Delta Hospital</div>
<div class="t" style="left:539.7px;top:1069.1px;width:160px;text-align:center;font-size:14.3px;color:#1a1a1a;font-weight:normal;letter-spacing:0.05px;-webkit-text-stroke:0.2px #1a1a1a">Type</div>
<div class="t" style="left:677.7px;top:1069.1px;width:160px;text-align:center;font-size:14.3px;color:#1a1a1a;font-weight:normal;letter-spacing:0.05px;-webkit-text-stroke:0.2px #1a1a1a">Jenny Wilson</div>
<div class="card" style="left:851px;top:724px;width:558px;height:420px"></div>
<div class="t" style="left:876.5px;top:748.5px;font-size:18.2px;color:#777;font-weight:normal;letter-spacing:0.2px">Last 20 Logs</div>
<div class="t" style="left:900px;top:794px;font-size:12.2px;color:#111;font-weight:bold;letter-spacing:0.2px">Date</div>
<svg class="a" style="left:931.6px;top:794.5px" width="11" height="9" viewBox="0 0 11 9"><path d="M1.2 2.2l4.3 4.3L9.8 2.2" stroke="#111" stroke-width="1.5" fill="none"/></svg>
<div class="t" style="left:991.0px;top:794px;width:140px;text-align:center;font-size:12.2px;color:#9a9a9a;font-weight:normal;letter-spacing:0.2px;-webkit-text-stroke:0.2px #9a9a9a">Facility</div>
<div class="t" style="left:1129.7px;top:794px;width:140px;text-align:center;font-size:12.2px;color:#9a9a9a;font-weight:normal;letter-spacing:0.2px;-webkit-text-stroke:0.2px #9a9a9a">Log Type</div>
<div class="t" style="left:1267.7px;top:794px;width:140px;text-align:center;font-size:12.2px;color:#9a9a9a;font-weight:normal;letter-spacing:0.2px;-webkit-text-stroke:0.2px #9a9a9a">Person</div>
<div class="hl" style="left:852px;top:817px;width:556px"></div>
<div class="hl" style="left:852px;top:870px;width:556px"></div>
<div class="hl" style="left:852px;top:923px;width:556px"></div>
<div class="hl" style="left:852px;top:996px;width:556px"></div>
<div class="hl" style="left:852px;top:1049px;width:556px"></div>
<div class="t" style="left:843.0px;top:837.6px;width:160px;text-align:center;font-size:13.8px;color:#1a1a1a;font-weight:normal;letter-spacing:-0.35px;-webkit-text-stroke:0.2px #1a1a1a">Mar 1, 2021</div>
<div class="t" style="left:981.0px;top:837.1px;width:160px;text-align:center;font-size:14.3px;color:#1a1a1a;font-weight:normal;letter-spacing:0.05px;-webkit-text-stroke:0.2px #1a1a1a">Base Hospital</div>
<div class="t" style="left:1119.7px;top:837.1px;width:160px;text-align:center;font-size:14.3px;color:#1a1a1a;font-weight:normal;letter-spacing:0.05px;-webkit-text-stroke:0.2px #1a1a1a">Type</div>
<div class="t" style="left:1257.7px;top:837.1px;width:160px;text-align:center;font-size:14.3px;color:#1a1a1a;font-weight:normal;letter-spacing:0.05px;-webkit-text-stroke:0.2px #1a1a1a">Dianne Russell</div>
<div class="t" style="left:843.0px;top:890.6px;width:160px;text-align:center;font-size:13.8px;color:#1a1a1a;font-weight:normal;letter-spacing:-0.35px;-webkit-text-stroke:0.2px #1a1a1a">Mar 13, 2021</div>
<div class="t" style="left:981.0px;top:890.1px;width:160px;text-align:center;font-size:14.3px;color:#1a1a1a;font-weight:normal;letter-spacing:0.05px;-webkit-text-stroke:0.2px #1a1a1a">Brnaby Hospital</div>
<div class="t" style="left:1119.7px;top:890.1px;width:160px;text-align:center;font-size:14.3px;color:#1a1a1a;font-weight:normal;letter-spacing:0.05px;-webkit-text-stroke:0.2px #1a1a1a">Type</div>
<div class="t" style="left:1257.7px;top:890.1px;width:160px;text-align:center;font-size:14.3px;color:#1a1a1a;font-weight:normal;letter-spacing:0.05px;-webkit-text-stroke:0.2px #1a1a1a">Robert Fox</div>
<div class="t" style="left:843.0px;top:953.6px;width:160px;text-align:center;font-size:13.8px;color:#1a1a1a;font-weight:normal;letter-spacing:-0.35px;-webkit-text-stroke:0.2px #1a1a1a">Mar 15, 2021</div>
<div class="t" style="left:981.0px;top:942.7px;width:160px;text-align:center;font-size:14.3px;color:#1a1a1a;font-weight:normal;letter-spacing:0.05px;-webkit-text-stroke:0.2px #1a1a1a">Peace Arch</div>
<div class="t" style="left:981.0px;top:962.9px;width:160px;text-align:center;font-size:14.3px;color:#1a1a1a;font-weight:normal;letter-spacing:0.05px;-webkit-text-stroke:0.2px #1a1a1a">Hospital</div>
<div class="t" style="left:1119.7px;top:953.1px;width:160px;text-align:center;font-size:14.3px;color:#1a1a1a;font-weight:normal;letter-spacing:0.05px;-webkit-text-stroke:0.2px #1a1a1a">Type</div>
<div class="t" style="left:1257.7px;top:953.1px;width:160px;text-align:center;font-size:14.3px;color:#1a1a1a;font-weight:normal;letter-spacing:0.05px;-webkit-text-stroke:0.2px #1a1a1a">Courtney Henry</div>
<div class="t" style="left:843.0px;top:1016.6px;width:160px;text-align:center;font-size:13.8px;color:#1a1a1a;font-weight:normal;letter-spacing:-0.35px;-webkit-text-stroke:0.2px #1a1a1a">Mar 18, 2021</div>
<div class="t" style="left:981.0px;top:1016.1px;width:160px;text-align:center;font-size:14.3px;color:#1a1a1a;font-weight:normal;letter-spacing:0.05px;-webkit-text-stroke:0.2px #1a1a1a">Richmond Hospital</div>
<div class="t" style="left:1119.7px;top:1016.1px;width:160px;text-align:center;font-size:14.3px;color:#1a1a1a;font-weight:normal;letter-spacing:0.05px;-webkit-text-stroke:0.2px #1a1a1a">Type</div>
<div class="t" style="left:1257.7px;top:1016.1px;width:160px;text-align:center;font-size:14.3px;color:#1a1a1a;font-weight:normal;letter-spacing:0.05px;-webkit-text-stroke:0.2px #1a1a1a">Devon Lane</div>
<div class="t" style="left:843.0px;top:1069.6px;width:160px;text-align:center;font-size:13.8px;color:#1a1a1a;font-weight:normal;letter-spacing:-0.35px;-webkit-text-stroke:0.2px #1a1a1a">Mar 1, 2021</div>
<div class="t" style="left:981.0px;top:1069.1px;width:160px;text-align:center;font-size:14.3px;color:#1a1a1a;font-weight:normal;letter-spacing:0.05px;-webkit-text-stroke:0.2px #1a1a1a">Base Hospital</div>
<div class="t" style="left:1119.7px;top:1069.1px;width:160px;text-align:center;font-size:14.3px;color:#1a1a1a;font-weight:normal;letter-spacing:0.05px;-webkit-text-stroke:0.2px #1a1a1a">Type</div>
<div class="t" style="left:1257.7px;top:1069.1px;width:160px;text-align:center;font-size:14.3px;color:#1a1a1a;font-weight:normal;letter-spacing:0.05px;-webkit-text-stroke:0.2px #1a1a1a">Dianne Russell</div>
</body></html>
